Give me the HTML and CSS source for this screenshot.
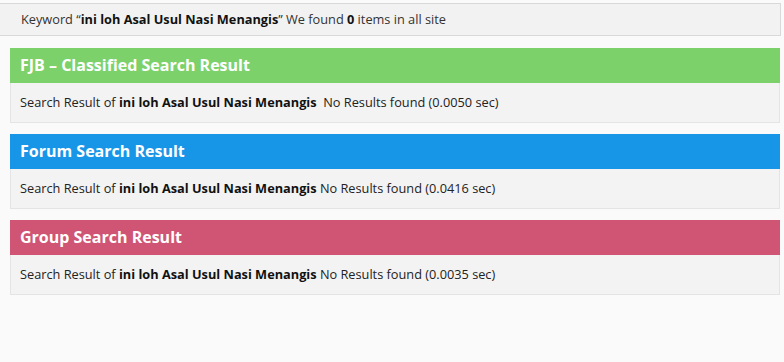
FILE: index.html
```html
<!DOCTYPE html>
<html lang="en">
<head>
  <meta charset="UTF-8">
  <title>Search Result</title>
  <link rel="stylesheet" href="styles.css">
</head>
<body>
  <div class="keyword-bar">
    Keyword &ldquo;<b>ini loh Asal Usul Nasi Menangis</b>&rdquo; We found <b>0</b> items in all site
  </div>

  <div class="results">
    <section class="result-box">
      <h2 class="result-title fjb">FJB &ndash; Classified Search Result</h2>
      <div class="result-body">Search Result of <b>ini loh Asal Usul Nasi Menangis</b>&nbsp; No Results found (0.0050 sec)</div>
    </section>

    <section class="result-box">
      <h2 class="result-title forum">Forum Search Result</h2>
      <div class="result-body">Search Result of <b>ini loh Asal Usul Nasi Menangis</b> No Results found (0.0416 sec)</div>
    </section>

    <section class="result-box">
      <h2 class="result-title group">Group Search Result</h2>
      <div class="result-body">Search Result of <b>ini loh Asal Usul Nasi Menangis</b> No Results found (0.0035 sec)</div>
    </section>
  </div>
</body>
</html>
```

FILE: styles.css
```css
* {
  box-sizing: border-box;
}

body {
  margin: 0;
  background: #fafafa;
  font-family: "Open Sans", Arial, sans-serif;
  font-size: 12.75px;
  color: #222;
}

b {
  font-weight: 700;
  color: #111;
}

.keyword-bar {
  margin: 3px 0 0 -1px;
  width: 782px;
  height: 33px;
  padding: 0 0 0 21px;
  line-height: 30px;
  background: #f2f2f2;
  border: 1px solid #d9d9d9;
  color: #333;
}

.results {
  display: flex;
  flex-direction: column;
  gap: 11px;
  padding: 12px 0 0 10px;
  width: 780px;
}

.result-title {
  margin: 0;
  height: 35px;
  padding-left: 10px;
  line-height: 35px;
  font-size: 16px;
  font-weight: 700;
  color: #fff;
}

.fjb { background: #7dd16b; }
.forum { background: #1796e8; }
.group { background: #d05473; }

.result-body {
  height: 40px;
  padding-left: 9px;
  line-height: 39px;
  background: #f3f3f3;
  border: 1px solid #e4e4e4;
  border-top: none;
}
```
